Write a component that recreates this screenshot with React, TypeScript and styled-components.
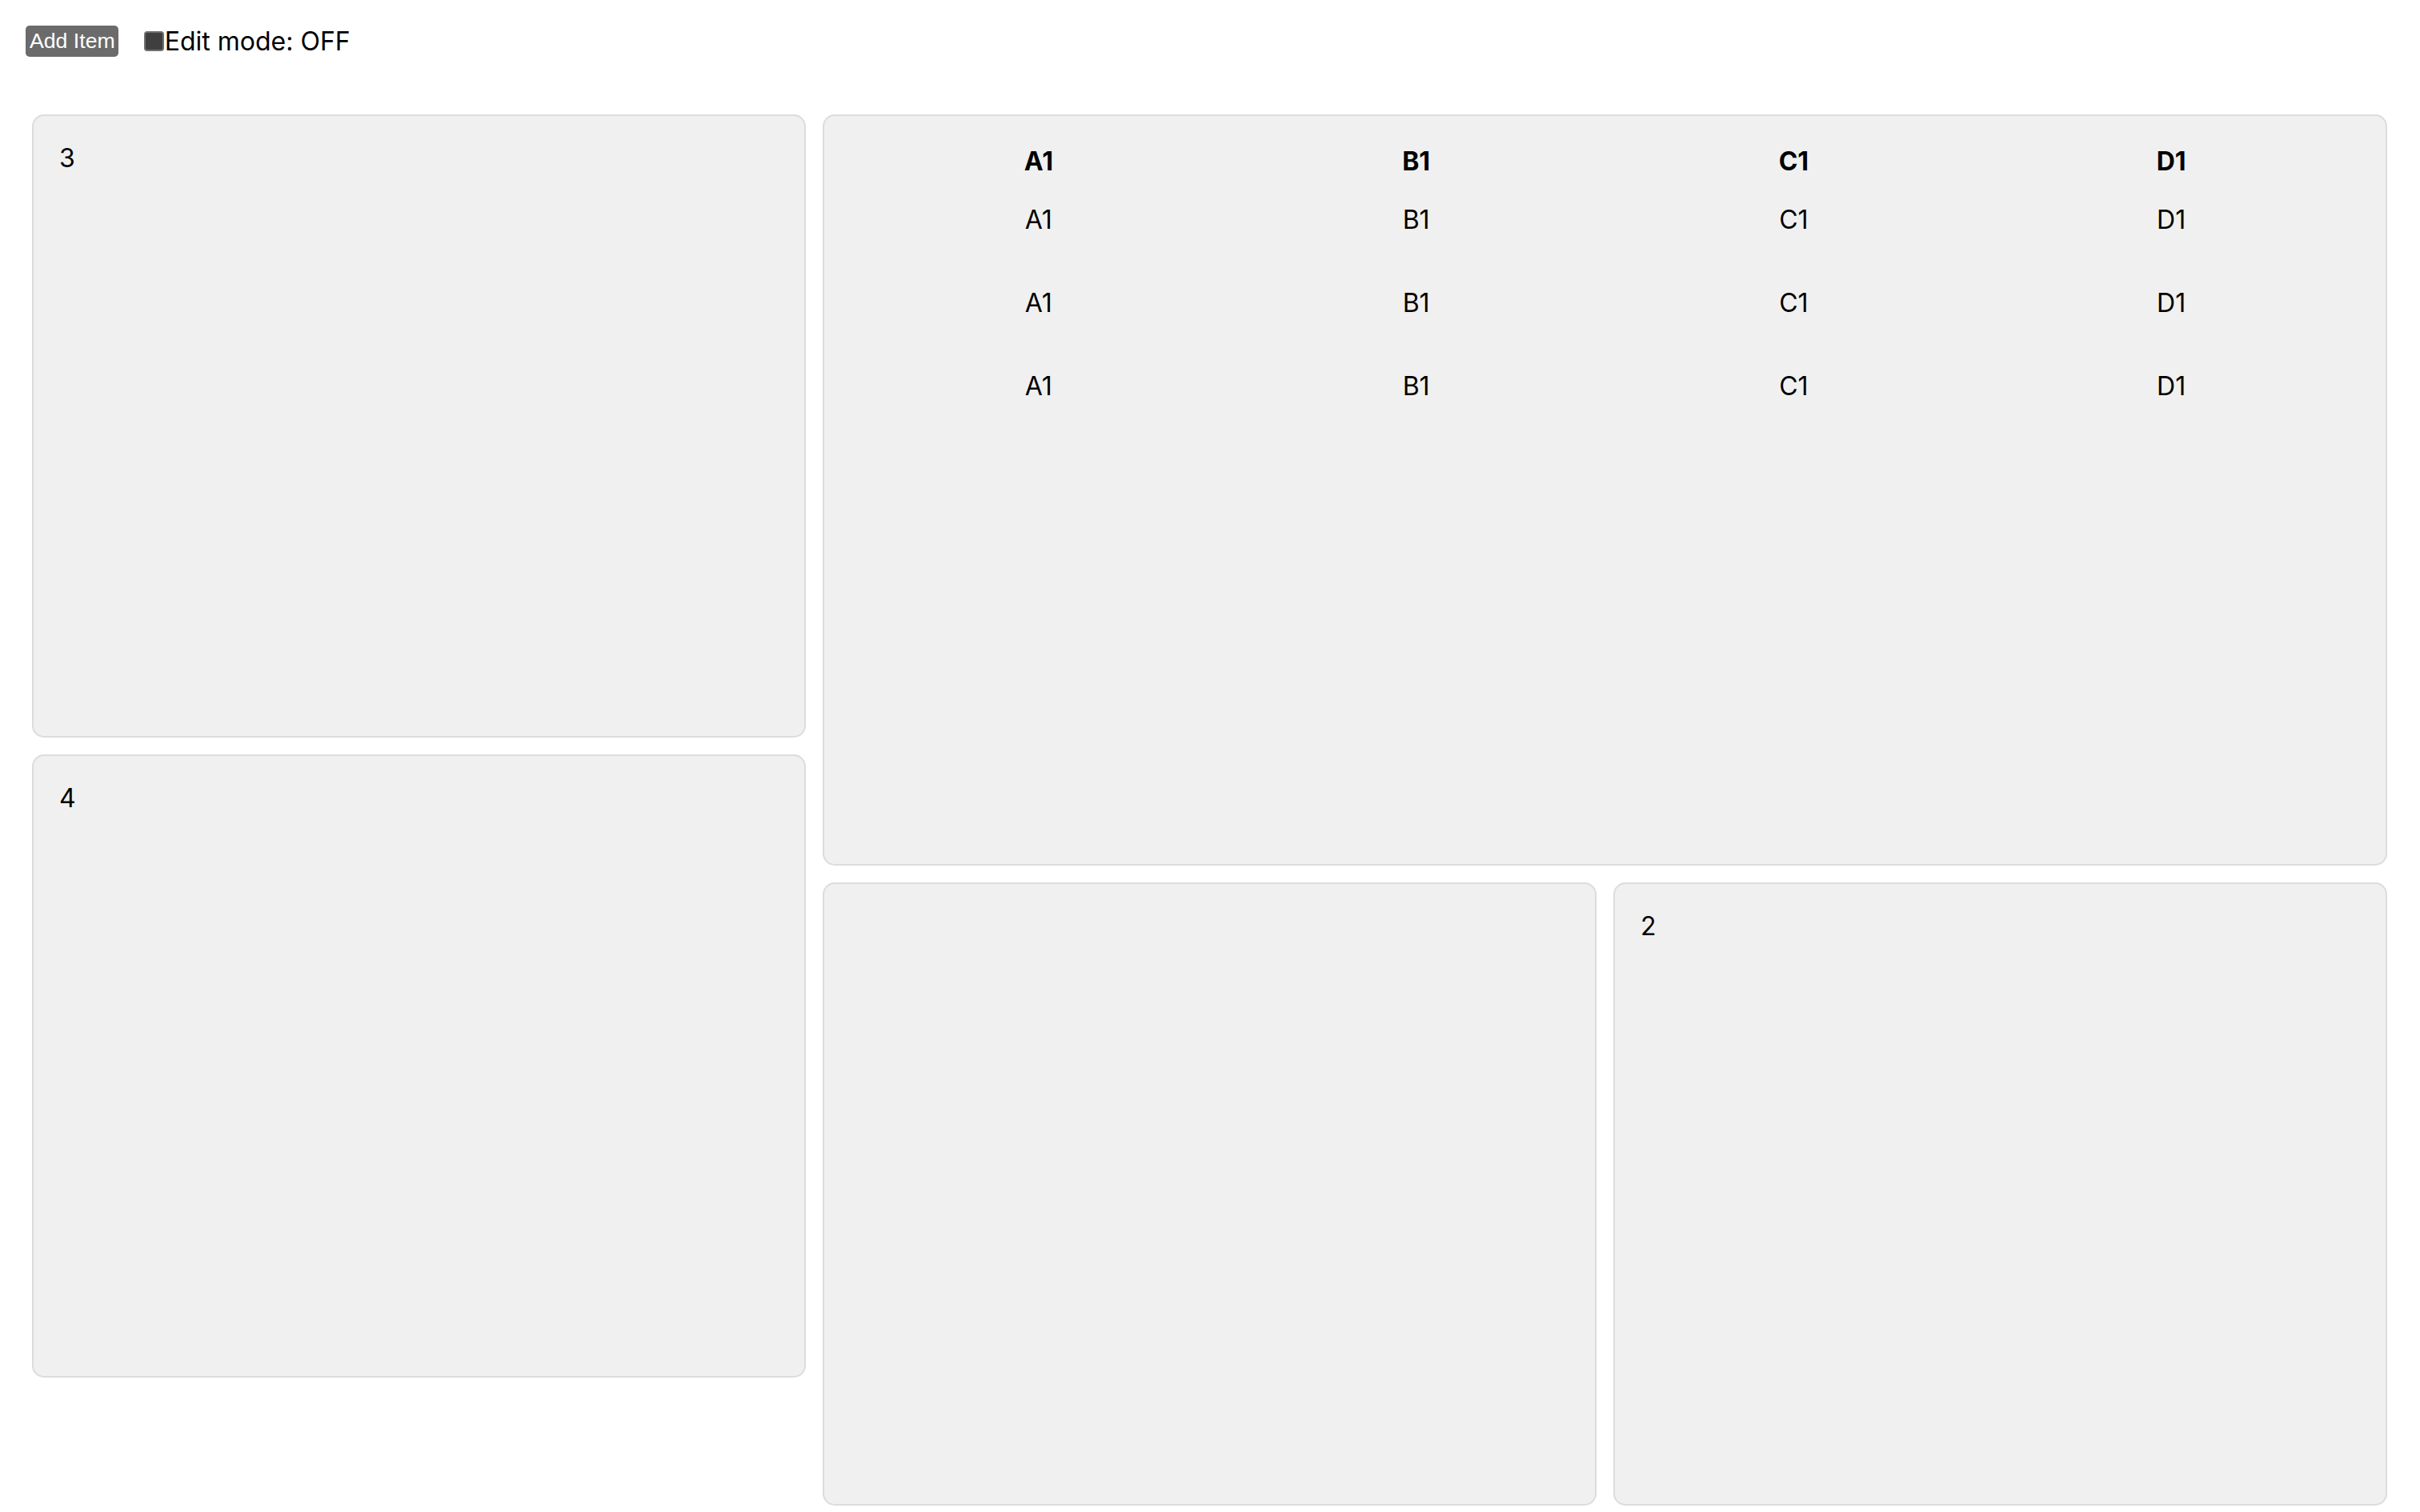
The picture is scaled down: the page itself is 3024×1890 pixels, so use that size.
import React, { useState } from "react";
import styled, { createGlobalStyle } from "styled-components";

const Global = createGlobalStyle`
  html, body { margin: 0; padding: 0; background: #ffffff; }
  body { font-family: Inter, "Noto Sans", sans-serif; color: #000; }
`;

const Page = styled.div`
  padding: 32px 32px 8px 32px;
`;

const Toolbar = styled.div`
  display: flex;
  align-items: center;
  height: 39px;
`;

const AddButton = styled.button`
  height: 39px;
  padding: 0 4px 0 5px;
  border: none;
  border-radius: 5px;
  background: #6b6b6b;
  color: #ffffff;
  font-family: "Liberation Sans", Arial, sans-serif;
  font-size: 26.67px;
  line-height: 39px;
  cursor: pointer;
`;

const ToggleLabel = styled.label`
  display: flex;
  align-items: center;
  margin-left: 32px;
  font-family: Inter, sans-serif;
  font-size: 32px;
  line-height: 39px;
`;

const Check = styled.input`
  appearance: none;
  margin: 0 1px 0 0;
  width: 25px;
  height: 25px;
  box-sizing: border-box;
  border: 2px solid #6f6f6f;
  border-radius: 4px;
  background: #3f3f3f;
`;

const Grid = styled.div`
  display: grid;
  grid-template-columns: repeat(3, 967px);
  grid-auto-rows: 139px;
  gap: 21px;
  margin-top: 72px;
  padding-left: 8px;
`;

const Card = styled.div<{ $col: string; $row: string }>`
  grid-column: ${(p) => p.$col};
  grid-row: ${(p) => p.$row};
  box-sizing: border-box;
  background: #f0f0f0;
  border: 2px solid #dcdcdc;
  border-radius: 15px;
  padding: 34px 32px 32px 32px;
  font-size: 32px;
  line-height: 38px;
  overflow: hidden;
`;

const Table = styled.table`
  width: 100%;
  border-collapse: collapse;
  table-layout: fixed;
  font-size: 32px;
`;

const Th = styled.th`
  padding: 4px 0 2px 0;
  line-height: 38px;
  font-weight: 700;
  text-align: center;
`;

const Td = styled.td`
  padding: 33px 0;
  line-height: 38px;
  text-align: center;
`;

const cols = ["A1", "B1", "C1", "D1"];

export default function App() {
  const [edit, setEdit] = useState(false);
  return (
    <>
      <Global />
      <Page>
        <Toolbar>
          <AddButton>Add Item</AddButton>
          <ToggleLabel>
            <Check type="checkbox" checked={edit} onChange={() => setEdit(!edit)} />
            Edit mode: {edit ? "ON" : "OFF"}
          </ToggleLabel>
        </Toolbar>
        <Grid>
          <Card $col="1" $row="1 / span 5">3</Card>
          <Card $col="2 / span 2" $row="1 / span 6">
            <Table>
              <thead>
                <tr>
                  {cols.map((c) => (
                    <Th key={c}>{c}</Th>
                  ))}
                </tr>
              </thead>
              <tbody>
                {[0, 1, 2].map((r) => (
                  <tr key={r}>
                    {cols.map((c) => (
                      <Td key={c}>{c}</Td>
                    ))}
                  </tr>
                ))}
              </tbody>
            </Table>
          </Card>
          <Card $col="1" $row="6 / span 5">4</Card>
          <Card $col="2" $row="7 / span 5" />
          <Card $col="3" $row="7 / span 5">2</Card>
        </Grid>
      </Page>
    </>
  );
}
